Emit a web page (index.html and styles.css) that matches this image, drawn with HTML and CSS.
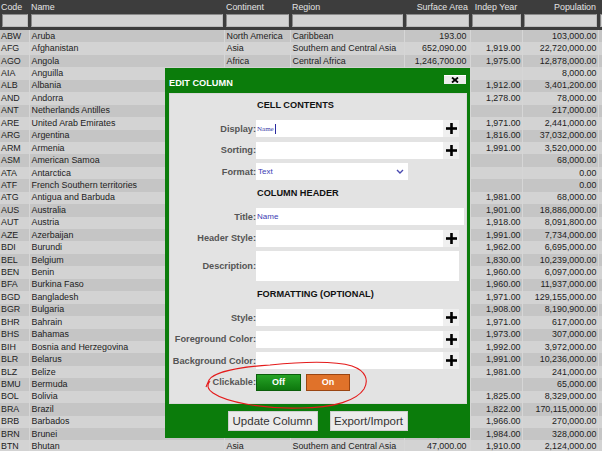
FILE: index.html
```html
<!DOCTYPE html>
<html>
<head>
<meta charset="utf-8">
<link rel="stylesheet" href="styles.css">
</head>
<body>
<table class="grid">
  <colgroup>
    <col class="c-code"><col class="c-name"><col class="c-cont"><col class="c-reg"><col class="c-surf"><col class="c-indep"><col class="c-pop"><col class="c-extra">
  </colgroup>
  <thead>
    <tr class="hlabels">
      <th>Code</th><th>Name</th><th>Continent</th><th>Region</th><th class="num">Surface Area</th><th class="mid">Indep Year</th><th class="num">Population</th><th></th>
    </tr>
    <tr class="hfilters">
      <th><input class="flt"></th><th><input class="flt"></th><th><input class="flt"></th><th><input class="flt"></th><th><input class="flt"></th><th><input class="flt"></th><th><input class="flt"></th><th><input class="flt"></th>
    </tr>
  </thead>
  <tbody>
    <tr><td>ABW</td><td>Aruba</td><td>North America</td><td>Caribbean</td><td class="num">193.00</td><td class="num"></td><td class="num">103,000.00</td><td></td></tr>
    <tr><td>AFG</td><td>Afghanistan</td><td>Asia</td><td>Southern and Central Asia</td><td class="num">652,090.00</td><td class="num">1,919.00</td><td class="num">22,720,000.00</td><td></td></tr>
    <tr><td>AGO</td><td>Angola</td><td>Africa</td><td>Central Africa</td><td class="num">1,246,700.00</td><td class="num">1,975.00</td><td class="num">12,878,000.00</td><td></td></tr>
    <tr><td>AIA</td><td>Anguilla</td><td>North America</td><td>Caribbean</td><td class="num">96.00</td><td class="num"></td><td class="num">8,000.00</td><td></td></tr>
    <tr><td>ALB</td><td>Albania</td><td>Europe</td><td>Southern Europe</td><td class="num">28,748.00</td><td class="num">1,912.00</td><td class="num">3,401,200.00</td><td></td></tr>
    <tr><td>AND</td><td>Andorra</td><td>Europe</td><td>Southern Europe</td><td class="num">468.00</td><td class="num">1,278.00</td><td class="num">78,000.00</td><td></td></tr>
    <tr><td>ANT</td><td>Netherlands Antilles</td><td>North America</td><td>Caribbean</td><td class="num">800.00</td><td class="num"></td><td class="num">217,000.00</td><td></td></tr>
    <tr><td>ARE</td><td>United Arab Emirates</td><td>Asia</td><td>Middle East</td><td class="num">83,600.00</td><td class="num">1,971.00</td><td class="num">2,441,000.00</td><td></td></tr>
    <tr><td>ARG</td><td>Argentina</td><td>South America</td><td>South America</td><td class="num">2,780,400.00</td><td class="num">1,816.00</td><td class="num">37,032,000.00</td><td></td></tr>
    <tr><td>ARM</td><td>Armenia</td><td>Asia</td><td>Middle East</td><td class="num">29,800.00</td><td class="num">1,991.00</td><td class="num">3,520,000.00</td><td></td></tr>
    <tr><td>ASM</td><td>American Samoa</td><td>Oceania</td><td>Polynesia</td><td class="num">199.00</td><td class="num"></td><td class="num">68,000.00</td><td></td></tr>
    <tr><td>ATA</td><td>Antarctica</td><td>Antarctica</td><td>Antarctica</td><td class="num">13,120,000.00</td><td class="num"></td><td class="num">0.00</td><td></td></tr>
    <tr><td>ATF</td><td>French Southern territories</td><td>Antarctica</td><td>Antarctica</td><td class="num">7,780.00</td><td class="num"></td><td class="num">0.00</td><td></td></tr>
    <tr><td>ATG</td><td>Antigua and Barbuda</td><td>North America</td><td>Caribbean</td><td class="num">442.00</td><td class="num">1,981.00</td><td class="num">68,000.00</td><td></td></tr>
    <tr><td>AUS</td><td>Australia</td><td>Oceania</td><td>Australia and New Zealand</td><td class="num">7,741,220.00</td><td class="num">1,901.00</td><td class="num">18,886,000.00</td><td></td></tr>
    <tr><td>AUT</td><td>Austria</td><td>Europe</td><td>Western Europe</td><td class="num">83,859.00</td><td class="num">1,918.00</td><td class="num">8,091,800.00</td><td></td></tr>
    <tr><td>AZE</td><td>Azerbaijan</td><td>Asia</td><td>Middle East</td><td class="num">86,600.00</td><td class="num">1,991.00</td><td class="num">7,734,000.00</td><td></td></tr>
    <tr><td>BDI</td><td>Burundi</td><td>Africa</td><td>Eastern Africa</td><td class="num">27,834.00</td><td class="num">1,962.00</td><td class="num">6,695,000.00</td><td></td></tr>
    <tr><td>BEL</td><td>Belgium</td><td>Europe</td><td>Western Europe</td><td class="num">30,518.00</td><td class="num">1,830.00</td><td class="num">10,239,000.00</td><td></td></tr>
    <tr><td>BEN</td><td>Benin</td><td>Africa</td><td>Western Africa</td><td class="num">112,622.00</td><td class="num">1,960.00</td><td class="num">6,097,000.00</td><td></td></tr>
    <tr><td>BFA</td><td>Burkina Faso</td><td>Africa</td><td>Western Africa</td><td class="num">274,000.00</td><td class="num">1,960.00</td><td class="num">11,937,000.00</td><td></td></tr>
    <tr><td>BGD</td><td>Bangladesh</td><td>Asia</td><td>Southern and Central Asia</td><td class="num">143,998.00</td><td class="num">1,971.00</td><td class="num">129,155,000.00</td><td></td></tr>
    <tr><td>BGR</td><td>Bulgaria</td><td>Europe</td><td>Eastern Europe</td><td class="num">110,994.00</td><td class="num">1,908.00</td><td class="num">8,190,900.00</td><td></td></tr>
    <tr><td>BHR</td><td>Bahrain</td><td>Asia</td><td>Middle East</td><td class="num">694.00</td><td class="num">1,971.00</td><td class="num">617,000.00</td><td></td></tr>
    <tr><td>BHS</td><td>Bahamas</td><td>North America</td><td>Caribbean</td><td class="num">13,878.00</td><td class="num">1,973.00</td><td class="num">307,000.00</td><td></td></tr>
    <tr><td>BIH</td><td>Bosnia and Herzegovina</td><td>Europe</td><td>Southern Europe</td><td class="num">51,197.00</td><td class="num">1,992.00</td><td class="num">3,972,000.00</td><td></td></tr>
    <tr><td>BLR</td><td>Belarus</td><td>Europe</td><td>Eastern Europe</td><td class="num">207,600.00</td><td class="num">1,991.00</td><td class="num">10,236,000.00</td><td></td></tr>
    <tr><td>BLZ</td><td>Belize</td><td>North America</td><td>Central America</td><td class="num">22,696.00</td><td class="num">1,981.00</td><td class="num">241,000.00</td><td></td></tr>
    <tr><td>BMU</td><td>Bermuda</td><td>North America</td><td>North America</td><td class="num">53.00</td><td class="num"></td><td class="num">65,000.00</td><td></td></tr>
    <tr><td>BOL</td><td>Bolivia</td><td>South America</td><td>South America</td><td class="num">1,098,581.00</td><td class="num">1,825.00</td><td class="num">8,329,000.00</td><td></td></tr>
    <tr><td>BRA</td><td>Brazil</td><td>South America</td><td>South America</td><td class="num">8,547,403.00</td><td class="num">1,822.00</td><td class="num">170,115,000.00</td><td></td></tr>
    <tr><td>BRB</td><td>Barbados</td><td>North America</td><td>Caribbean</td><td class="num">430.00</td><td class="num">1,966.00</td><td class="num">270,000.00</td><td></td></tr>
    <tr><td>BRN</td><td>Brunei</td><td>Asia</td><td>Southeast Asia</td><td class="num">5,765.00</td><td class="num">1,984.00</td><td class="num">328,000.00</td><td></td></tr>
    <tr><td>BTN</td><td>Bhutan</td><td>Asia</td><td>Southern and Central Asia</td><td class="num">47,000.00</td><td class="num">1,910.00</td><td class="num">2,124,000.00</td><td></td></tr>
  </tbody>
</table>

<div class="dialog">
  <div class="dlg-title">
    <span class="dlg-name">EDIT COLUMN</span>
    <span class="close"><svg width="10" height="6" viewBox="0 0 10 6"><path d="M2 0.5 L8 5.5 M8 0.5 L2 5.5" stroke="#000" stroke-width="1.8"/></svg></span>
  </div>
  <div class="panel">
    <div class="sec first">CELL CONTENTS</div>
    <div class="row">
      <label class="lbl">Display:</label>
      <div class="field w-plus"><span class="val serif">Name</span><span class="caret"></span></div>
      <span class="plus"><svg width="11" height="11" viewBox="0 0 11 11"><rect x="0" y="4.2" width="11" height="2.6" fill="#000"/><rect x="4.2" y="0" width="2.6" height="11" fill="#000"/></svg></span>
    </div>
    <div class="row">
      <label class="lbl">Sorting:</label>
      <div class="field w-plus"></div>
      <span class="plus"><svg width="11" height="11" viewBox="0 0 11 11"><rect x="0" y="4.2" width="11" height="2.6" fill="#000"/><rect x="4.2" y="0" width="2.6" height="11" fill="#000"/></svg></span>
    </div>
    <div class="row">
      <label class="lbl">Format:</label>
      <div class="field w-select"><span class="val">Text</span><svg class="chev" width="8" height="5" viewBox="0 0 8 5"><path d="M1 1 L4 4 L7 1" fill="none" stroke="#4a4ab0" stroke-width="1.4"/></svg></div>
    </div>
    <div class="sec">COLUMN HEADER</div>
    <div class="row">
      <label class="lbl">Title:</label>
      <div class="field w-full"><span class="val">Name</span></div>
    </div>
    <div class="row">
      <label class="lbl">Header Style:</label>
      <div class="field w-plus"></div>
      <span class="plus"><svg width="11" height="11" viewBox="0 0 11 11"><rect x="0" y="4.2" width="11" height="2.6" fill="#000"/><rect x="4.2" y="0" width="2.6" height="11" fill="#000"/></svg></span>
    </div>
    <div class="row tall">
      <label class="lbl">Description:</label>
      <div class="field w-desc"></div>
    </div>
    <div class="sec">FORMATTING (OPTIONAL)</div>
    <div class="row">
      <label class="lbl">Style:</label>
      <div class="field w-plus"></div>
      <span class="plus"><svg width="11" height="11" viewBox="0 0 11 11"><rect x="0" y="4.2" width="11" height="2.6" fill="#000"/><rect x="4.2" y="0" width="2.6" height="11" fill="#000"/></svg></span>
    </div>
    <div class="row">
      <label class="lbl">Foreground Color:</label>
      <div class="field w-plus"></div>
      <span class="plus"><svg width="11" height="11" viewBox="0 0 11 11"><rect x="0" y="4.2" width="11" height="2.6" fill="#000"/><rect x="4.2" y="0" width="2.6" height="11" fill="#000"/></svg></span>
    </div>
    <div class="row">
      <label class="lbl">Background Color:</label>
      <div class="field w-plus"></div>
      <span class="plus"><svg width="11" height="11" viewBox="0 0 11 11"><rect x="0" y="4.2" width="11" height="2.6" fill="#000"/><rect x="4.2" y="0" width="2.6" height="11" fill="#000"/></svg></span>
    </div>
    <div class="row">
      <label class="lbl">Clickable:</label>
      <div class="toggles">
        <span class="tg off">Off</span>
        <span class="tg on">On</span>
      </div>
    </div>
  </div>
  <div class="actions">
    <button class="btn b-update">Update Column</button>
    <button class="btn b-export">Export/Import</button>
  </div>
</div>

<svg class="scribble" width="602" height="451" viewBox="0 0 602 451">
  <path d="M206 387 L209 380 C214 372 240 367 270 365 C300 362 335 361 352 366 C366 371 369 380 364 389 C357 400 335 408 300 408 C262 409 226 402 213 393 C207 389 207 385 210 381" fill="none" stroke="#e41b1b" stroke-width="1.1"/>
</svg>
</body>
</html>
```

FILE: styles.css
```css
html, body {
  margin: 0;
  padding: 0;
  overflow: hidden;
  width: 602px;
  height: 451px;
  background: #d0d0d0;
  font-family: "Liberation Sans", Arial, sans-serif;
}

.grid {
  border-collapse: collapse;
  table-layout: fixed;
  width: 618px;
  font-size: 8.9px;
  color: #222;
}

.c-code { width: 29px; }
.c-name { width: 195px; }
.c-cont { width: 66px; }
.c-reg { width: 114px; }
.c-surf { width: 66px; }
.c-indep { width: 52px; }
.c-pop { width: 76px; }
.c-extra { width: 20px; }

.grid thead tr { background: #3d3d3d; }

.hlabels th {
  height: 14px;
  padding: 0 2px;
  color: #e4e4e4;
  font-weight: normal;
  text-align: left;
  white-space: nowrap;
  vertical-align: middle;
  line-height: 12px;
}
.hlabels th:first-child { padding-left: 1px; }
.hlabels th.num { text-align: right; padding-right: 2px; }
.hlabels th.mid { text-align: center; }

.hfilters th {
  height: 15px;
  padding: 0 0 1px 2px;
  vertical-align: top;
}
.flt {
  display: block;
  box-sizing: border-box;
  width: calc(100% - 1px);
  height: 13px;
  margin: 0;
  padding: 0;
  background: #d3d3d3;
  border: 1px solid #8a8a8a;
  border-right-color: #bcbcbc;
  border-bottom-color: #bcbcbc;
}

.grid tbody tr { height: 12.45px; background: #d3d3d3; }
.grid tbody tr:nth-child(odd) { background: #c5c5c5; }

.grid td {
  padding: 0 2px;
  line-height: 11px;
  white-space: nowrap;
  overflow: hidden;
  border-left: 1px solid rgba(255, 255, 255, 0.14);
}
.grid td:first-child { padding-left: 1px; border-left: none; }
.grid td:nth-child(2) { padding-left: 2px; }
.grid td.num { text-align: right; }
.grid td:nth-child(5) { padding-right: 3px; }
.grid td:nth-child(6) { padding-right: 1px; }
.grid td:nth-child(7) { padding-right: 1px; }

/* dialog */
.dialog {
  position: absolute;
  left: 165px;
  top: 68px;
  width: 305px;
  height: 370px;
  box-sizing: border-box;
  padding: 0 3px 0 4px;
  background: #0b7c0b;
  display: flex;
  flex-direction: column;
}

.dlg-title {
  height: 25px;
  display: flex;
  align-items: center;
  justify-content: space-between;
}
.dlg-name {
  color: #fff;
  font-size: 9.2px;
  font-weight: bold;
  padding-top: 4px;
}
.close {
  width: 22px;
  height: 8px;
  margin-right: 1px;
  margin-bottom: 2px;
  background: #ececec;
  border-top: 1px solid #fff;
  display: flex;
  align-items: center;
  justify-content: center;
}

.panel {
  height: 311px;
  box-sizing: border-box;
  padding-top: 4px;
  background: #e3e3e3;
  border: 1px solid #d8d8d8;
}

.sec {
  padding-left: 87px;
  height: 14px;
  line-height: 14px;
  font-size: 9.2px;
  font-weight: bold;
  color: #111;
  margin-top: 6px;
  margin-bottom: 8px;
}
.sec.first { margin-top: 0; }

.row {
  display: flex;
  align-items: center;
  height: 17px;
  margin-bottom: 4.5px;
}
.row.tall { height: 30px; align-items: center; }

.lbl {
  width: 86px;
  flex: none;
  text-align: right;
  font-size: 9.2px;
  font-weight: bold;
  color: #555;
}

.field {
  height: 17px;
  box-sizing: border-box;
  background: #fff;
  display: flex;
  align-items: center;
  padding-left: 1px;
}
.w-plus { width: 187px; }
.w-full { width: 208px; }
.w-select { width: 152px; position: relative; padding-left: 2px; }
.w-desc { width: 203px; height: 30px; }

.val {
  font-size: 8px;
  color: #3c3cb4;
}
.val.serif {
  font-family: "Liberation Serif", "Times New Roman", serif;
  font-size: 7px;
  color: #3a3aa8;
}
.caret {
  width: 1px;
  height: 10px;
  background: #2a2aa0;
  margin-left: 1px;
}
.chev {
  position: absolute;
  right: 4px;
  top: 6px;
}

.plus {
  width: 16px;
  height: 17px;
  background: #efefef;
  display: flex;
  align-items: center;
  justify-content: center;
}

.toggles {
  display: flex;
  gap: 5px;
}
.tg {
  height: 17px;
  box-sizing: border-box;
  display: flex;
  align-items: center;
  justify-content: center;
  color: #fff;
  font-size: 9px;
  font-weight: bold;
}
.tg.off {
  width: 45px;
  background: linear-gradient(#26a326, #0e780e);
  border: 1px solid #0a5e0a;
}
.tg.on {
  width: 44px;
  background: #e0722a;
  border: 1px solid #9a4512;
}

.actions {
  display: flex;
  justify-content: center;
  gap: 12px;
  margin-top: 7px;
  padding-right: 1px;
}
.btn {
  height: 20px;
  margin: 0;
  padding: 0;
  font-family: "Liberation Sans", Arial, sans-serif;
  font-size: 11.5px;
  color: #333;
  background: #ebebeb;
  border: 1px solid #cfcfcf;
}
.b-update { width: 90px; }
.b-export { width: 78px; }

.scribble {
  position: absolute;
  left: 0;
  top: 0;
  pointer-events: none;
}
```
